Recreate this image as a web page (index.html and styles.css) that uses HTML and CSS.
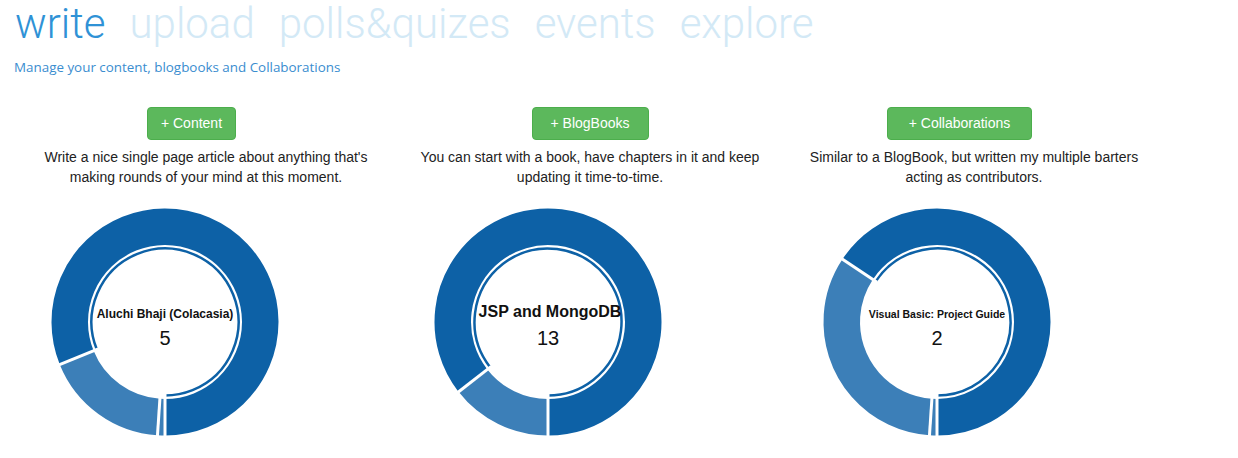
FILE: index.html
```html
<!DOCTYPE html>
<html>
<head>
<meta charset="utf-8">
<title>write</title>
<link rel="stylesheet" href="styles.css">
</head>
<body>
<nav class="tabs">
  <span class="tab active">write</span>
  <span class="tab">upload</span>
  <span class="tab">polls&amp;quizes</span>
  <span class="tab">events</span>
  <span class="tab">explore</span>
</nav>
<p class="subtitle">Manage your content, blogbooks and Collaborations</p>

<div class="cols">
  <section class="col">
    <div class="btn-row"><a class="btn btn-content btn-shift">+ Content</a></div>
    <p class="desc">Write a nice single page article about anything that's making rounds of your mind at this moment.</p>
    <svg class="donut" width="280" height="240" viewBox="0 0 280 240">
      <circle class="seg dark" cx="136" cy="120" r="95.25" pathLength="360" stroke-dasharray="292 1000" transform="rotate(158 136 120)"/>
      <circle class="seg light" cx="136" cy="120" r="95.25" pathLength="360" stroke-dasharray="64.2 1000" transform="rotate(93.8 136 120)"/>
      <circle class="seg light" cx="136" cy="120" r="95.25" pathLength="360" stroke-dasharray="3.8 1000" transform="rotate(90 136 120)"/>
      <circle class="hover" cx="136" cy="120" r="73.5" pathLength="360" stroke-dasharray="292 1000" transform="rotate(158 136 120)"/>
      <line class="sep" x1="136" y1="48" x2="136" y2="3" transform="rotate(180 136 120)"/>
      <line class="sep" x1="136" y1="48" x2="136" y2="3" transform="rotate(183.8 136 120)"/>
      <line class="sep" x1="136" y1="48" x2="136" y2="3" transform="rotate(248 136 120)"/>
      <text class="lbl lbl-1" x="136" y="116">Aluchi Bhaji (Colacasia)</text>
      <text class="num" x="136" y="142.5">5</text>
    </svg>
  </section>

  <section class="col">
    <div class="btn-row"><a class="btn btn-blog">+ BlogBooks</a></div>
    <p class="desc">You can start with a book, have chapters in it and keep updating it time-to-time.</p>
    <svg class="donut" width="280" height="240" viewBox="0 0 280 240">
      <circle class="seg dark" cx="135" cy="120" r="95.25" pathLength="360" stroke-dasharray="308 1000" transform="rotate(142 135 120)"/>
      <circle class="seg light" cx="135" cy="120" r="95.25" pathLength="360" stroke-dasharray="52 1000" transform="rotate(90 135 120)"/>
      <circle class="hover" cx="135" cy="120" r="73.5" pathLength="360" stroke-dasharray="308 1000" transform="rotate(142 135 120)"/>
      <line class="sep" x1="135" y1="48" x2="135" y2="3" transform="rotate(180 135 120)"/>
      <line class="sep" x1="135" y1="48" x2="135" y2="3" transform="rotate(232 135 120)"/>
      <text class="lbl lbl-2" x="137" y="114.5">JSP and MongoDB</text>
      <text class="num" x="135" y="142.5">13</text>
    </svg>
  </section>

  <section class="col">
    <div class="btn-row"><a class="btn btn-collab btn-shift">+ Collaborations</a></div>
    <p class="desc">Similar to a BlogBook, but written my multiple barters acting as contributors.</p>
    <svg class="donut" width="280" height="240" viewBox="0 0 280 240">
      <circle class="seg dark" cx="140" cy="120" r="95.25" pathLength="360" stroke-dasharray="236.4 1000" transform="rotate(213.6 140 120)"/>
      <circle class="seg light" cx="140" cy="120" r="95.25" pathLength="360" stroke-dasharray="119.8 1000" transform="rotate(93.8 140 120)"/>
      <circle class="seg light" cx="140" cy="120" r="95.25" pathLength="360" stroke-dasharray="3.8 1000" transform="rotate(90 140 120)"/>
      <circle class="hover" cx="140" cy="120" r="73.5" pathLength="360" stroke-dasharray="236.4 1000" transform="rotate(213.6 140 120)"/>
      <line class="sep" x1="140" y1="48" x2="140" y2="3" transform="rotate(180 140 120)"/>
      <line class="sep" x1="140" y1="48" x2="140" y2="3" transform="rotate(183.8 140 120)"/>
      <line class="sep" x1="140" y1="48" x2="140" y2="3" transform="rotate(303.6 140 120)"/>
      <text class="lbl lbl-3" x="140" y="115.5">Visual Basic: Project Guide</text>
      <text class="num" x="140" y="142.5">2</text>
    </svg>
  </section>
</div>
</body>
</html>
```

FILE: styles.css
```css
html, body {
  margin: 0;
  padding: 0;
  background: #ffffff;
}

body {
  padding: 2px 0 0 14px;
  font-family: "Liberation Sans", Arial, sans-serif;
  color: #222;
}

.tabs {
  display: flex;
  gap: 24px;
  padding-left: 1px;
  font-family: Roboto, "Noto Sans", sans-serif;
  font-weight: 300;
  font-size: 42px;
  line-height: 44px;
  height: 44px;
  white-space: nowrap;
}

.tab {
  color: #d3e9f6;
}

.tab.active {
  color: #2f92d6;
}

.subtitle {
  margin: 11.5px 0 0 0;
  font-family: "Open Sans", sans-serif;
  font-size: 13.4px;
  line-height: 18px;
  color: #3a8dcf;
}

.cols {
  display: grid;
  grid-template-columns: repeat(3, 384px);
  margin-top: 31.5px;
}

.col {
  padding: 0 15px;
  text-align: center;
}

.btn-row {
  text-align: center;
}

.btn {
  display: inline-block;
  padding: 6px 12px;
  font-size: 14px;
  line-height: 19px;
  color: #fff;
  background: #5cb85c;
  border: 1px solid #4cae4c;
  border-radius: 4px;
  cursor: pointer;
}

.btn-content {
  padding-left: 13px;
  padding-right: 13px;
}

.btn-blog {
  padding-left: 18px;
  padding-right: 18px;
}

.btn-collab {
  padding-left: 21px;
  padding-right: 21px;
}

.btn-shift {
  margin-right: 29px;
}

.desc {
  margin: 7px 0 0 0;
  font-size: 14px;
  line-height: 20px;
  color: #222;
}

.donut {
  display: block;
  margin-top: 15px;
}

.seg {
  fill: none;
  stroke-width: 36.5;
}

.seg.dark {
  stroke: #0d61a6;
}

.seg.light {
  stroke: #3c7fb8;
}

.hover {
  fill: none;
  stroke: #0d61a6;
  stroke-width: 2.5;
}

.sep {
  stroke: #ffffff;
  stroke-width: 3;
}

.lbl {
  font-family: "Liberation Sans", Arial, sans-serif;
  font-weight: bold;
  text-anchor: middle;
  fill: #111;
}

.lbl-1 {
  font-size: 12px;
}

.lbl-2 {
  font-size: 16px;
}

.lbl-3 {
  font-size: 10.5px;
}

.num {
  font-family: "Liberation Sans", Arial, sans-serif;
  font-size: 20px;
  text-anchor: middle;
  fill: #111;
}
```
